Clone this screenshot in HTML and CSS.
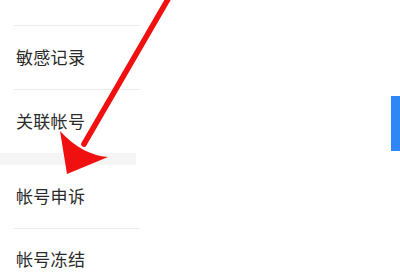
FILE: index.html
```html
<!DOCTYPE html>
<html lang="zh-CN">
<head>
<meta charset="utf-8">
<link rel="stylesheet" href="styles.css">
</head>
<body>
<div class="page">
  <div class="menu">
    <div class="row row-partial"></div>
    <div class="divider"></div>
    <div class="row">敏感记录</div>
    <div class="divider"></div>
    <div class="row">关联帐号</div>
    <div class="band"></div>
    <div class="row">帐号申诉</div>
    <div class="divider"></div>
    <div class="row row-last">帐号冻结</div>
  </div>
  <div class="side">
    <div class="tab"></div>
  </div>
</div>
<svg class="arrow" width="400" height="276" viewBox="0 0 400 276">
  <line x1="171" y1="-6" x2="84" y2="144" stroke="#f01010" stroke-width="5.5" stroke-linecap="round"/>
  <path d="M67,174 L60,131 Q82,155 108,157 Z" fill="#f01010"/>
</svg>
</body>
</html>
```
FILE: styles.css
```css
html, body {
  margin: 0;
  padding: 0;
  background: #ffffff;
}
body {
  width: 400px;
  height: 276px;
  overflow: hidden;
  position: relative;
  font-family: "Noto Sans CJK SC", "Noto Sans", sans-serif;
}
.page {
  display: flex;
  justify-content: space-between;
  height: 276px;
  overflow: hidden;
}
.menu {
  width: 140px;
  display: flex;
  flex-direction: column;
  flex-shrink: 0;
}
.row {
  height: 63px;
  flex-shrink: 0;
  display: flex;
  align-items: center;
  padding-left: 16px;
  padding-bottom: 2px;
  box-sizing: border-box;
  font-size: 17px;
  color: #2a2a2a;
  letter-spacing: 0.3px;
}
.row-partial {
  height: 25px;
}
.row-last {
  height: 47px;
  align-items: flex-start;
  padding-top: 17px;
}
.divider {
  height: 1px;
  flex-shrink: 0;
  margin-left: 14px;
  background: #ececec;
}
.band {
  height: 12px;
  flex-shrink: 0;
  width: 136px;
  background: #f5f5f5;
}
.side {
  display: flex;
  flex-direction: column;
  padding-top: 96px;
}
.tab {
  width: 9px;
  height: 55px;
  background: #2f86f6;
}
.arrow {
  position: absolute;
  left: 0;
  top: 0;
}
```
